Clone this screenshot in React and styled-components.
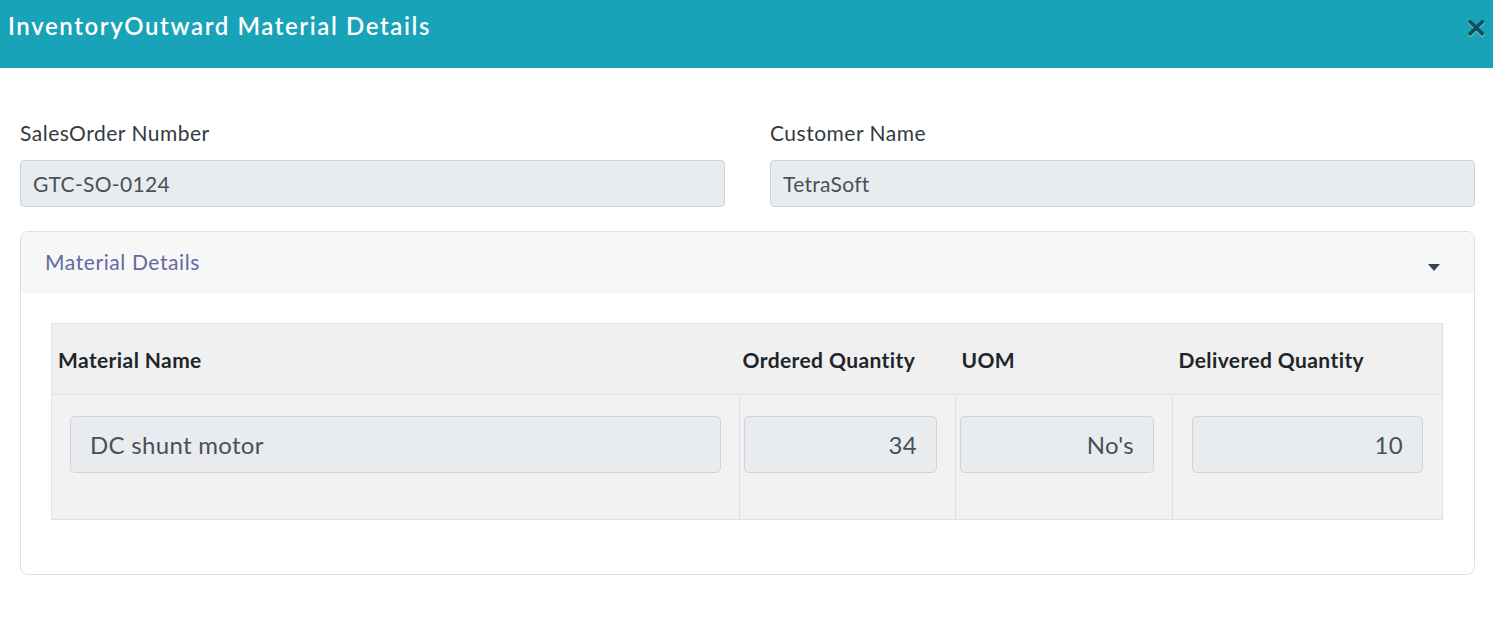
import React from 'react';
import styled, { createGlobalStyle } from 'styled-components';

const GlobalStyle = createGlobalStyle`
    body {
        margin: 0;
        background: #ffffff;
        font-family: Lato, "Open Sans", "Liberation Sans", sans-serif;
    }
`;

const materials = [
    { name: 'DC shunt motor', ordered: '34', uom: "No's", delivered: '10' },
];

const App = () => {
    return (
        <>
            <GlobalStyle />
            <Modal>
                <Header>
                    <Title>InventoryOutward Material Details</Title>
                    <Close aria-label="Close">×</Close>
                </Header>

                <Body>
                    <FieldRow>
                        <Field>
                            <Label>SalesOrder Number</Label>
                            <Input readOnly value="GTC-SO-0124" />
                        </Field>
                        <Field>
                            <Label>Customer Name</Label>
                            <Input readOnly value="TetraSoft" />
                        </Field>
                    </FieldRow>

                    <Card>
                        <CardHeader>
                            <CardTitle>Material Details</CardTitle>
                            <Caret viewBox="0 0 12 8">
                                <path d="M0 0 H12 L6 7 Z" fill="#2e4458" />
                            </Caret>
                        </CardHeader>
                        <CardBody>
                            <Table>
                                <colgroup>
                                    <col style={{ width: '688px' }} />
                                    <col style={{ width: '216px' }} />
                                    <col style={{ width: '217px' }} />
                                    <col />
                                </colgroup>
                                <thead>
                                    <tr>
                                        <Th>Material Name</Th>
                                        <Th pad="3px">Ordered Quantity</Th>
                                        <Th>UOM</Th>
                                        <Th>Delivered Quantity</Th>
                                    </tr>
                                </thead>
                                <tbody>
                                    {materials.map((m, idx) => (
                                        <tr key={idx}>
                                            <Td pad="0 18px 0 18px">
                                                <CellInput readOnly value={m.name} />
                                            </Td>
                                            <Td pad="0 18px 0 4px">
                                                <CellInput readOnly right value={m.ordered} />
                                            </Td>
                                            <Td pad="0 18px 0 4px">
                                                <CellInput readOnly right value={m.uom} />
                                            </Td>
                                            <Td pad="0 19px 0 19px">
                                                <CellInput readOnly right value={m.delivered} />
                                            </Td>
                                        </tr>
                                    ))}
                                </tbody>
                            </Table>
                        </CardBody>
                    </Card>
                </Body>
            </Modal>
        </>
    );
};

const Modal = styled.div`
    width: 100%;
    min-height: 620px;
    background: #ffffff;
`;

const Header = styled.div`
    height: 68px;
    background-color: #19a3b9;
    display: flex;
    align-items: flex-start;
    justify-content: space-between;
    padding: 0 0 0 8px;
    box-sizing: border-box;
`;

const Title = styled.h5`
    margin: 11px 0 0 0;
    color: #ffffff;
    font-size: 24px;
    font-weight: 600;
    letter-spacing: 1.6px;
    line-height: 30px;
`;

const Close = styled.button`
    border: 0;
    background: transparent;
    margin: 7px 3px 0 0;
    padding: 0 4px;
    font-family: "Liberation Sans", Arial, sans-serif;
    font-size: 34px;
    font-weight: 700;
    line-height: 40px;
    color: #000000;
    opacity: 0.5;
    text-shadow: 0 1px 0 #ffffff;
    cursor: pointer;
`;

const Body = styled.div`
    padding: 52px 18px 0 20px;
`;

const FieldRow = styled.div`
    display: grid;
    grid-template-columns: 1fr 1fr;
    column-gap: 45px;
`;

const Field = styled.div`
    display: flex;
    flex-direction: column;
`;

const Label = styled.label`
    font-size: 21px;
    letter-spacing: 0.5px;
    color: #343a40;
    line-height: 26px;
    margin-bottom: 14px;
`;

const Input = styled.input`
    height: 47px;
    box-sizing: border-box;
    border: 1px solid #ced4da;
    border-radius: 4px;
    background-color: #e9ecef;
    color: #495057;
    font-family: inherit;
    font-size: 21px;
    letter-spacing: 0.3px;
    padding: 0 12px;
    outline: none;
`;

const Card = styled.div`
    margin-top: 24px;
    border: 1px solid #dfdfdf;
    border-radius: 8px;
    overflow: hidden;
    height: 344px;
    box-sizing: border-box;
`;

const CardHeader = styled.div`
    height: 61px;
    background-color: #f7f7f7;
    display: flex;
    align-items: center;
    justify-content: space-between;
    padding: 0 34px 0 24px;
`;

const CardTitle = styled.span`
    color: #6369a4;
    font-size: 21px;
    letter-spacing: 0.6px;
    margin-top: -2px;
`;

const Caret = styled.svg`
    width: 12px;
    height: 8px;
    margin-top: 10px;
`;

const CardBody = styled.div`
    padding: 30px 31px 0 30px;
`;

const Table = styled.table`
    width: 100%;
    border-collapse: collapse;
    table-layout: fixed;
    border: 1px solid #e0e0e0;
`;

const Th = styled.th`
    height: 70px;
    background-color: #f0f0f0;
    text-align: left;
    padding: 0 0 0 ${(props) => props.pad || '6px'};
    font-size: 21px;
    letter-spacing: 0.4px;
    font-weight: 700;
    color: #212529;
    border-bottom: 1px solid #dee2e6;
    white-space: nowrap;
`;

const Td = styled.td`
    height: 103px;
    background-color: #f2f2f2;
    padding: ${(props) => props.pad};
    border-left: 1px solid #dee2e6;
    vertical-align: top;
    padding-top: 21px;
    &:first-child {
        border-left: 0;
    }
`;

const CellInput = styled.input`
    width: 100%;
    height: 57px;
    box-sizing: border-box;
    border: 1px solid #ced4da;
    border-radius: 5px;
    background-color: #e9ecef;
    color: #495057;
    font-family: inherit;
    font-size: 24px;
    letter-spacing: 0.3px;
    padding: 0 19px;
    text-align: ${(props) => (props.right ? 'right' : 'left')};
    outline: none;
`;

export default App;
